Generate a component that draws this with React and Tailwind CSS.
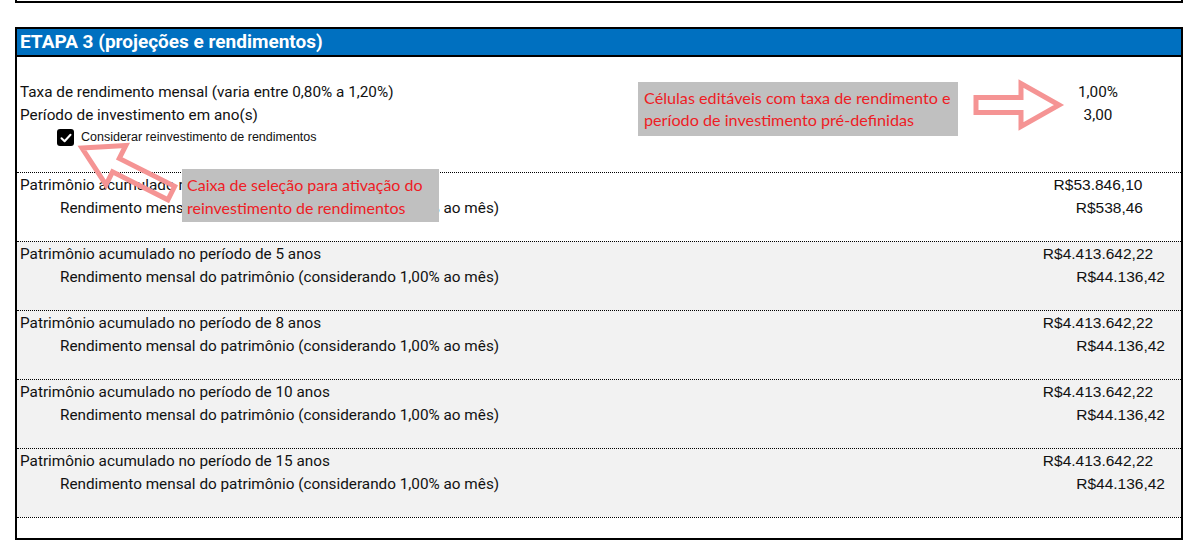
import React from "react";

const main = { fontFamily: "Roboto, 'Liberation Sans', sans-serif" };
const num = { fontFamily: "'Liberation Sans', Arial, sans-serif" };
const callout = { fontFamily: "Lato, 'Open Sans', sans-serif" };

function Group({ years, total, monthly, shaded, monthlyPr }) {
  return (
    <div className={`border-t border-dotted border-black ${shaded ? "bg-[#f2f2f2]" : "bg-white"}`}>
      <div className="flex h-[23px] items-center justify-between pl-[3px] pt-[1px]">
        <span>{years}</span>
        <span className="w-[166px] text-center text-[15.5px]" style={num}>{total}</span>
      </div>
      <div className="flex h-[23px] items-center justify-between pl-[43px] pt-[1px]">
        <span>Rendimento mensal do patrimônio (considerando 1,00% ao mês)</span>
        <span className={`text-[15.5px] ${monthlyPr}`} style={num}>{monthly}</span>
      </div>
      <div className="h-[22px]" />
    </div>
  );
}

export default function App() {
  return (
    <div className="relative h-[557px] w-[1202px] bg-white text-[15.3px] text-[#111]" style={main}>
      <div className="ml-[15px] mr-[19px] h-[3px] border-x-2 border-b-2 border-black" />
      <div className="ml-[15px] mr-[19px] mt-[24px] border-2 border-black">
        <div className="flex h-[28px] items-center border-b-2 border-black bg-[#0070c0] pl-[3px] pt-[1px] text-[19px] font-bold text-white">
          ETAPA 3 (projeções e rendimentos)
        </div>
        <div className="h-[23px]" />
        <div className="flex h-[23px] items-center justify-between pl-[3px] pt-[1px]">
          <span>Taxa de rendimento mensal (varia entre 0,80% a 1,20%)</span>
          <span className="w-[166px] text-center">1,00%</span>
        </div>
        <div className="flex h-[23px] items-center justify-between pl-[3px] pt-[1px]">
          <span>Período de investimento em ano(s)</span>
          <span className="w-[166px] text-center">3,00</span>
        </div>
        <div className="flex h-[23px] items-center gap-[7px] pl-[40px]">
          <span className="flex h-[17px] w-[17px] items-center justify-center rounded-[3px] bg-black">
            <svg width="12" height="10" viewBox="0 0 12 10">
              <path d="M1.5 5.2 L4.6 8.2 L10.5 1.8" fill="none" stroke="white" strokeWidth="2" strokeLinecap="round" strokeLinejoin="round" />
            </svg>
          </span>
          <span className="text-[12.5px]" style={num}>Considerar reinvestimento de rendimentos</span>
        </div>
        <div className="h-[23px]" />
        <Group years="Patrimônio acumulado no período de 3 anos" total="R$53.846,10" monthly="R$538,46" shaded={false} monthlyPr="pr-[38px]" />
        <Group years="Patrimônio acumulado no período de 5 anos" total="R$4.413.642,22" monthly="R$44.136,42" shaded monthlyPr="pr-[16px]" />
        <Group years="Patrimônio acumulado no período de 8 anos" total="R$4.413.642,22" monthly="R$44.136,42" shaded monthlyPr="pr-[16px]" />
        <Group years="Patrimônio acumulado no período de 10 anos" total="R$4.413.642,22" monthly="R$44.136,42" shaded monthlyPr="pr-[16px]" />
        <Group years="Patrimônio acumulado no período de 15 anos" total="R$4.413.642,22" monthly="R$44.136,42" shaded monthlyPr="pr-[16px]" />
        <div className="h-[21px] border-t border-dotted border-black bg-white" />
      </div>

      <svg className="pointer-events-none absolute left-0 top-0" width="1202" height="557">
        <g transform="translate(1059 105)">
          <polygon points="0,0 -38,-21.5 -38,-7.5 -83,-7.5 -83,7.5 -38,7.5 -38,21.5" fill="none" stroke="#f59494" strokeWidth="5" strokeLinejoin="miter" />
        </g>
        <g transform="translate(82 148) rotate(26.8)">
          <polygon points="0,0 38,-22 38,-7.5 100,-7.5 100,7.5 38,7.5 38,22" fill="none" stroke="#f59494" strokeWidth="5" strokeLinejoin="miter" />
        </g>
      </svg>

      <div className="absolute left-[638px] top-[82px] flex h-[54px] w-[320px] flex-col justify-center bg-[#c0c0c0] pl-[6px] text-[16.2px] leading-[22px] text-[#ee1c25]" style={callout}>
        <div>Células editáveis com taxa de rendimento e</div>
        <div>período de investimento pré-definidas</div>
      </div>
      <div className="absolute left-[182px] top-[169px] flex h-[53px] w-[257px] flex-col justify-center bg-[#c0c0c0] pl-[5px] text-[16px] leading-[23px] text-[#ee1c25]" style={callout}>
        <div>Caixa de seleção para ativação do</div>
        <div>reinvestimento de rendimentos</div>
      </div>
    </div>
  );
}
